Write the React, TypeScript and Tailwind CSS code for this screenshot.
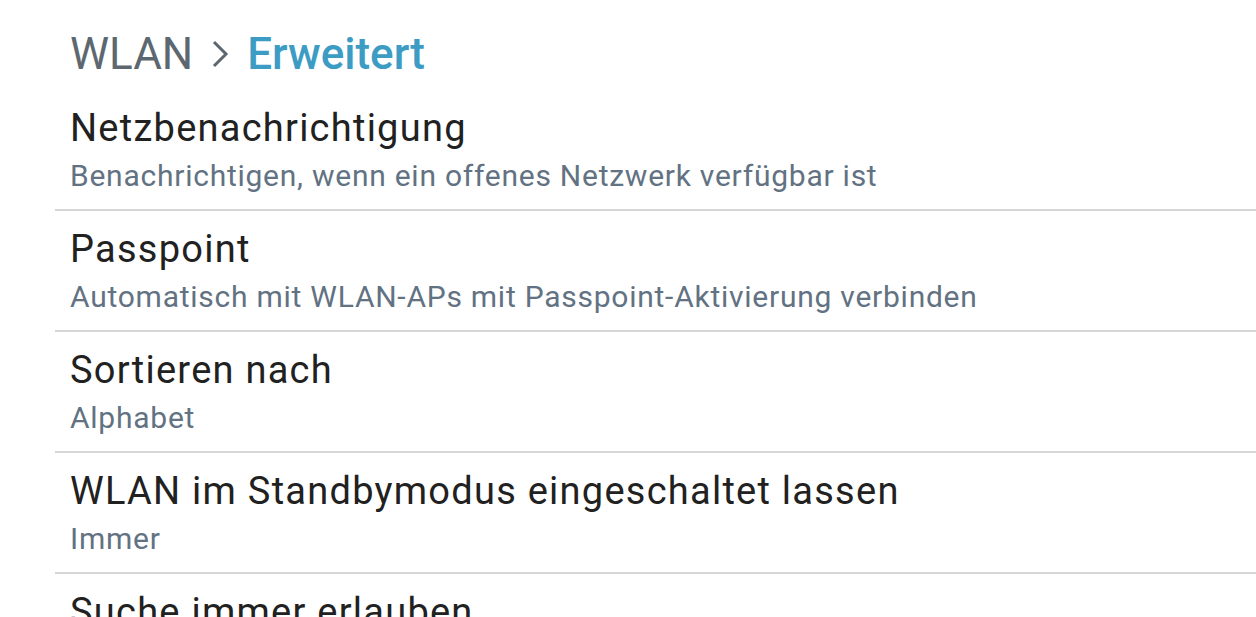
import React from 'react';

const items = [
  { title: 'Netzbenachrichtigung', sub: 'Benachrichtigen, wenn ein offenes Netzwerk verfügbar ist' },
  { title: 'Passpoint', sub: 'Automatisch mit WLAN-APs mit Passpoint-Aktivierung verbinden' },
  { title: 'Sortieren nach', sub: 'Alphabet' },
  { title: 'WLAN im Standbymodus eingeschaltet lassen', sub: 'Immer' },
  { title: 'Suche immer erlauben', sub: '' },
];

export default function App() {
  return (
    <div className="w-[1256px] h-[617px] overflow-hidden bg-white font-['Roboto',sans-serif]">
      {/* Header */}
      <div className="h-[90px] pl-[70px] pt-[26px] flex items-start text-[44px] leading-[56px]">
        <span className="text-[#5d6770]">WLAN</span>
        <span className="mx-[18px] text-[#5d6770]">
          <svg width="18" height="30" viewBox="0 0 18 30" className="mt-[13px]">
            <path d="M3 3 L15 15 L3 27" fill="none" stroke="currentColor" strokeWidth="3" />
          </svg>
        </span>
        <span className="font-medium text-[#3c9cc4]">Erweitert</span>
      </div>

      {/* List */}
      <div className="pl-[55px]">
        {items.map((it, i) => (
          <div key={i} className="border-b-2 border-[#d6d6d6] h-[121px] pl-[15px] pt-[14px]">
            <div className="text-[38px] leading-[48px] tracking-[1.25px] text-[#212121] whitespace-nowrap">
              {it.title}
            </div>
            {it.sub && (
              <div className="mt-[4px] text-[30px] leading-[40px] tracking-[0.75px] text-[#627282] whitespace-nowrap">
                {it.sub}
              </div>
            )}
          </div>
        ))}
      </div>
    </div>
  );
}
